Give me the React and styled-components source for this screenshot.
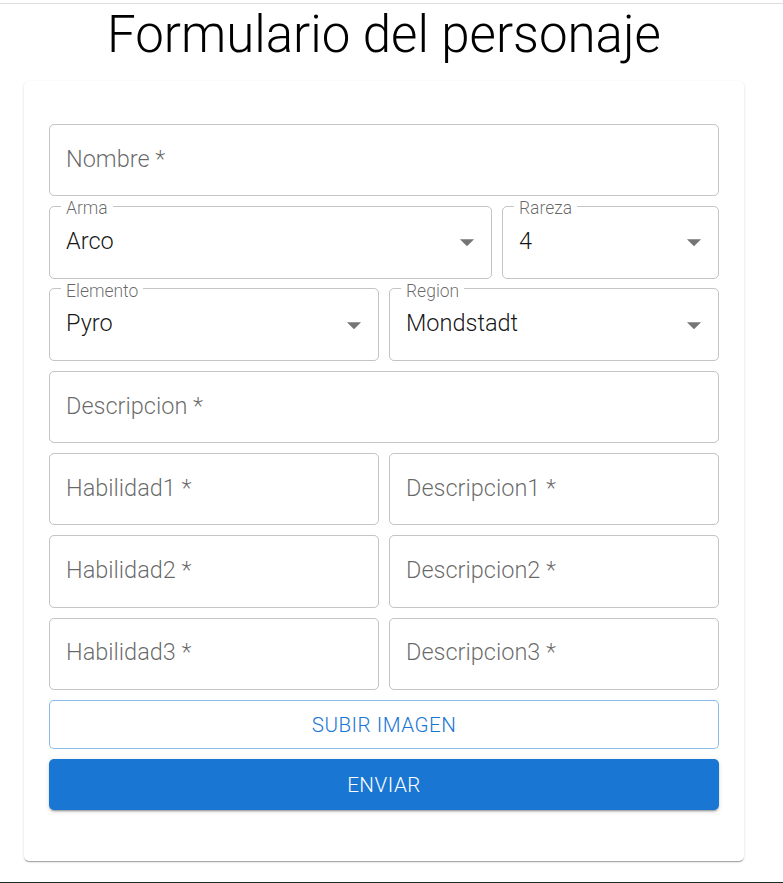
import React from 'react';
import styled, { createGlobalStyle } from 'styled-components';

const GlobalStyle = createGlobalStyle`
  html, body {
    margin: 0;
    padding: 0;
    background: #ffffff;
    font-family: Roboto, "Liberation Sans", Arial, sans-serif;
  }
`;

const Page = styled.div`
  margin-top: 3px;
  border-top: 1px solid #dedede;
`;

const Container = styled.div`
  width: 720px;
  margin-left: 24px;
`;

const Title = styled.h1`
  margin: 5px 0 20px;
  font-size: 51px;
  line-height: 52px;
  font-weight: 300;
  color: #000;
  text-align: center;
`;

const Card = styled.form`
  background: #fff;
  border-radius: 5px;
  box-shadow: 0px 2px 1px -1px rgba(0, 0, 0, 0.2), 0px 1px 1px 0px rgba(0, 0, 0, 0.14),
    0px 1px 3px 0px rgba(0, 0, 0, 0.12);
  padding: 43px 25px 51px;
  display: flex;
  flex-direction: column;
  gap: 10px;
`;

const Row = styled.div`
  display: grid;
  grid-template-columns: ${({ $cols }) => $cols || '1fr'};
  gap: 10px;
`;

const Control = styled.div`
  position: relative;
  height: 72.3px;
  display: flex;
  align-items: center;
  padding: 0 40px 3px 17px;
  box-sizing: border-box;
`;

const Outline = styled.fieldset`
  position: absolute;
  inset: ${({ $notched }) => ($notched ? '-8px' : '0')} 0 0 0;
  margin: 0;
  padding: 0 11px;
  border: 1px solid rgba(0, 0, 0, 0.23);
  border-radius: 5px;
  pointer-events: none;
  text-align: left;
`;

const Legend = styled.legend`
  padding: 4px 5px 0;
  font-size: 17.5px;
  line-height: 12px;
  font-weight: 300;
  color: rgba(0, 0, 0, 0.6);
`;

const Input = styled.input`
  position: relative;
  width: 100%;
  border: none;
  outline: none;
  background: transparent;
  padding: 0;
  font-family: inherit;
  font-size: 23.5px;
  font-weight: 400;
  color: rgba(0, 0, 0, 0.87);
  &::placeholder {
    color: rgba(0, 0, 0, 0.6);
    font-weight: 300;
    opacity: 1;
  }
`;

const Value = styled.div`
  position: relative;
  font-size: 23.5px;
  font-weight: 300;
  color: rgba(0, 0, 0, 0.92);
`;

const Arrow = styled.svg`
  position: absolute;
  right: 8px;
  top: 50%;
  margin-top: -17px;
  width: 34px;
  height: 34px;
  fill: rgba(0, 0, 0, 0.54);
`;

const Button = styled.button`
  height: ${({ $contained }) => ($contained ? '51px' : '49px')};
  border-radius: 5px;
  font-family: inherit;
  font-size: 20.6px;
  font-weight: 300;
  letter-spacing: 0.5px;
  text-transform: uppercase;
  cursor: pointer;
  border: ${({ $contained }) => ($contained ? 'none' : '1px solid rgba(25, 118, 210, 0.5)')};
  background: ${({ $contained }) => ($contained ? '#1976d2' : '#fff')};
  color: ${({ $contained }) => ($contained ? '#fff' : '#1976d2')};
  box-shadow: ${({ $contained }) =>
    $contained
      ? '0px 3px 1px -2px rgba(0,0,0,0.2), 0px 2px 2px 0px rgba(0,0,0,0.14), 0px 1px 5px 0px rgba(0,0,0,0.12)'
      : 'none'};
`;

const Footer = styled.div`
  margin-top: 21px;
  height: 20px;
  background: #1d2b1d;
`;

const TextField = ({ placeholder }) => (
  <Control>
    <Outline />
    <Input placeholder={placeholder} />
  </Control>
);

const SelectField = ({ label, value }) => (
  <Control>
    <Outline $notched>
      <Legend>{label}</Legend>
    </Outline>
    <Value>{value}</Value>
    <Arrow viewBox="0 0 24 24">
      <path d="M7 10l5 5 5-5z" />
    </Arrow>
  </Control>
);

export default function App() {
  return (
    <>
      <GlobalStyle />
      <Page>
        <Container>
          <Title>Formulario del personaje</Title>
          <Card onSubmit={(e) => e.preventDefault()}>
            <TextField placeholder="Nombre *" />
            <Row $cols="443px 1fr">
              <SelectField label="Arma" value="Arco" />
              <SelectField label="Rareza" value="4" />
            </Row>
            <Row $cols="1fr 1fr">
              <SelectField label="Elemento" value="Pyro" />
              <SelectField label="Region" value="Mondstadt" />
            </Row>
            <TextField placeholder="Descripcion *" />
            <Row $cols="1fr 1fr">
              <TextField placeholder="Habilidad1 *" />
              <TextField placeholder="Descripcion1 *" />
            </Row>
            <Row $cols="1fr 1fr">
              <TextField placeholder="Habilidad2 *" />
              <TextField placeholder="Descripcion2 *" />
            </Row>
            <Row $cols="1fr 1fr">
              <TextField placeholder="Habilidad3 *" />
              <TextField placeholder="Descripcion3 *" />
            </Row>
            <Button type="button">Subir imagen</Button>
            <Button type="submit" $contained>Enviar</Button>
          </Card>
        </Container>
        <Footer />
      </Page>
    </>
  );
}
